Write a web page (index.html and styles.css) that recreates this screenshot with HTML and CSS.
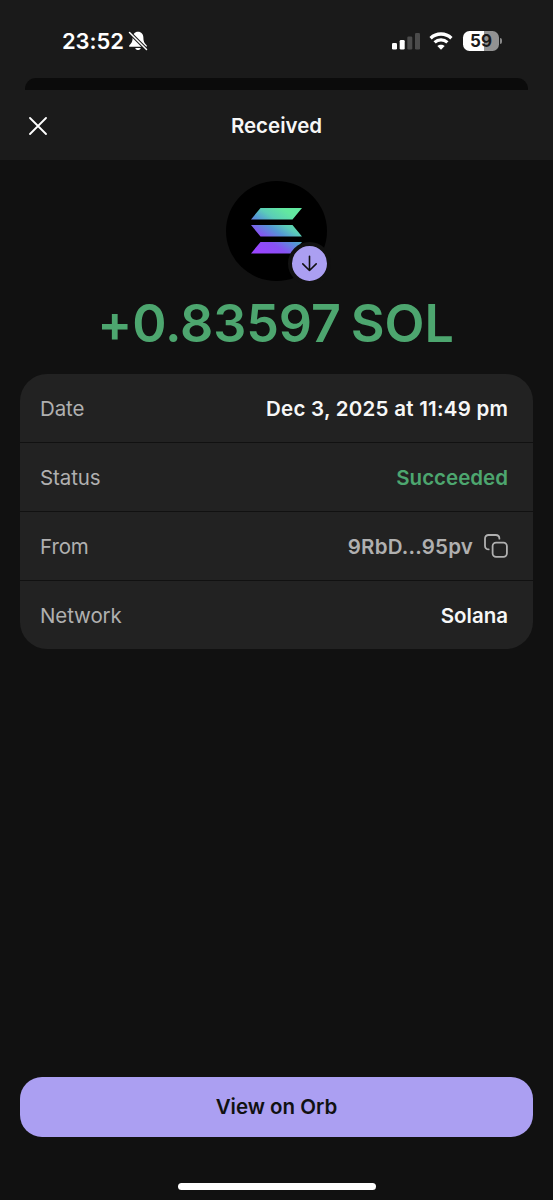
FILE: index.html
```html
<!DOCTYPE html>
<html lang="en">
<head>
    <meta charset="UTF-8">
    <meta name="viewport" content="width=device-width, initial-scale=1.0">
    <title>Received</title>
    <link rel="stylesheet" href="styles.css">
</head>
<body>

    <div class="status-bar">
        <div class="clock">
            <span class="time">23:52</span>
            <svg width="20" height="20" viewBox="0 0 20 20">
                <path d="M10 0.800C6.700 0.800 4.600 3.300 4.600 6.800 4.600 11 3.200 12.600 1.200 14.400V15.800H18.800V14.400C16.800 12.600 15.400 11 15.400 6.800 15.400 3.300 13.300 0.800 10 0.800Z" fill="#fff"/>
                <path d="M7.300 17H12.700C12.200 19.800 7.800 19.800 7.300 17Z" fill="#fff"/>
                <path d="M1.500 1.500L18.500 18.500" stroke="#1a1a1a" stroke-width="3.600"/>
                <path d="M1.500 1.500L18.500 18.500" stroke="#fff" stroke-width="1.500" stroke-linecap="round"/>
            </svg>
        </div>
        <div class="indicators">
            <svg class="signal" width="28" height="18" viewBox="0 0 28 18">
                <rect x="0" y="11" width="5" height="6.500" rx="1.300" fill="#fff"/>
                <rect x="7.700" y="8" width="5" height="9.500" rx="1.300" fill="#fff"/>
                <rect x="15.300" y="4.500" width="5" height="13" rx="1.300" fill="#4b4b4b"/>
                <rect x="23" y="1" width="5" height="16.500" rx="1.300" fill="#4b4b4b"/>
            </svg>
            <svg class="wifi" width="24" height="18" viewBox="0 0 24 18">
                <path d="M1.600 6.200C7.400.600 16.600.600 22.400 6.200" fill="none" stroke="#fff" stroke-width="3.300"/>
                <path d="M5.600 10.400C9.200 7 14.800 7 18.400 10.400" fill="none" stroke="#fff" stroke-width="3.200"/>
                <path d="M8.300 14C10.400 12.200 13.600 12.200 15.700 14L12 17.700Z" fill="#fff"/>
            </svg>
            <div class="battery">59</div>
            <div class="battery-tip"></div>
        </div>
    </div>

    <div class="sheet-behind"></div>

    <div class="header">
        <svg class="close" width="18" height="18" viewBox="0 0 18 18">
            <path d="M1 1L17 17M17 1L1 17" stroke="#fff" stroke-width="1.800" stroke-linecap="round"/>
        </svg>
        <h1>Received</h1>
    </div>

    <div class="content">
        <div class="token">
            <svg width="51" height="46" viewBox="0 0 51 46">
                <defs>
                    <linearGradient id="sol" gradientUnits="userSpaceOnUse" x1="8" y1="49" x2="43" y2="-3">
                        <stop offset="0.080" stop-color="#9945ff"/>
                        <stop offset="0.300" stop-color="#8752f3"/>
                        <stop offset="0.500" stop-color="#5497d5"/>
                        <stop offset="0.650" stop-color="#5bcdb8"/>
                        <stop offset="0.850" stop-color="#62e8a0"/>
                    </linearGradient>
                </defs>
                <path d="M9.500 0H51L41.500 11.500H0ZM0 17H41.500L51 28.500H9.500ZM9.500 34H51L41.500 45.500H0Z" fill="url(#sol)"/>
            </svg>
            <div class="badge">
                <svg width="17" height="17" viewBox="0 0 17 17">
                    <path d="M8.500 1.300V15.500M1.800 8.900L8.500 15.500L15.200 8.900" fill="none" stroke="#111" stroke-width="1.600" stroke-linecap="round" stroke-linejoin="round"/>
                </svg>
            </div>
        </div>

        <div class="amount">+0.83597 SOL</div>

        <div class="details">
            <div class="row">
                <span class="label">Date</span>
                <span class="value date">Dec 3, 2025 at 11:49 pm</span>
            </div>
            <div class="row">
                <span class="label">Status</span>
                <span class="value success">Succeeded</span>
            </div>
            <div class="row">
                <span class="label">From</span>
                <span class="value address">9RbD...95pv</span>
                <svg class="copy" width="24" height="24" viewBox="0 0 24 24">
                    <rect x="8.600" y="8.600" width="14.300" height="14.200" rx="3.500"/>
                    <path d="M4.700 15.400C2.400 15.400 1 14 1 11.700V4.700C1 2.400 2.400 1 4.700 1H11.700C14 1 15.400 2.400 15.400 4.700"/>
                </svg>
            </div>
            <div class="row">
                <span class="label">Network</span>
                <span class="value">Solana</span>
            </div>
        </div>
    </div>

    <div class="footer">
        <button class="view-btn">View on Orb</button>
        <div class="home-indicator"></div>
    </div>

</body>
</html>
```
FILE: styles.css
```css
* {
    box-sizing: border-box;
}

body {
    font-family: Inter, 'Liberation Sans', sans-serif;
    background: #111;
    color: #f7f7f7;
    margin: 0;
    height: 1200px;
    display: flex;
    flex-direction: column;
    overflow: hidden;
}

svg {
    display: block;
    flex-shrink: 0;
}

/* Status bar */
.status-bar {
    height: 78px;
    padding: 4px 51px 0 62px;
    background: #1a1a1a;
    display: flex;
    justify-content: space-between;
}

.clock,
.indicators {
    height: 74px;
    display: flex;
    align-items: center;
    color: #fff;
}

.clock {
    gap: 4px;
}

.time {
    font-size: 22px;
    font-weight: 600;
    letter-spacing: -0.1px;
}

.wifi {
    margin: 0 10px 0 9px;
}

.battery {
    width: 36px;
    height: 20px;
    border-radius: 6.5px;
    background: linear-gradient(to right, #fff 59%, #929292 59%);
    color: #1a1a1a;
    font-size: 17px;
    font-weight: 700;
    line-height: 20px;
    text-align: center;
}

.battery-tip {
    width: 2px;
    height: 6px;
    margin-left: 1px;
    border-radius: 0 2px 2px 0;
    background: #888;
}

.status-bar,
.header {
    flex-shrink: 0;
}

/* Sheet peeking out behind the header */
.sheet-behind {
    height: 12px;
    flex-shrink: 0;
    padding: 0 25px;
    background: #1a1a1a;
}

.sheet-behind::before {
    content: "";
    display: block;
    height: 12px;
    border-radius: 11px 11px 0 0;
    background: #0b0b0b;
}

.header {
    height: 70px;
    padding: 1px 28px 0 29px;
    background: #1b1b1b;
    display: flex;
    align-items: center;
}

.header h1 {
    flex: 1;
    margin: 0 19px 0 0;
    font-size: 20.5px;
    font-weight: 600;
    text-align: center;
}

/* Content */
.content {
    flex: 1;
    padding: 21px 20px 0;
}

.token {
    position: relative;
    width: 101px;
    height: 100px;
    margin: 0 auto;
    border-radius: 50%;
    background: #000;
    display: flex;
    align-items: center;
    justify-content: center;
}

.badge {
    position: absolute;
    right: -4px;
    bottom: -4px;
    width: 43px;
    height: 43px;
    border: 4px solid #111;
    border-radius: 50%;
    background: #ab9ff2;
    display: flex;
    align-items: center;
    justify-content: center;
}

.amount {
    margin: 10px 0 17px;
    padding-right: 2px;
    color: #4da66f;
    font-size: 52px;
    font-weight: 600;
    word-spacing: -3px;
    letter-spacing: -0.1px;
    line-height: 66px;
    text-align: center;
    white-space: nowrap;
}

.details {
    border-radius: 27px;
    background: #222;
    overflow: hidden;
}

.row {
    height: 69px;
    padding: 0 25px 0 20px;
    border-bottom: 1px solid #111;
    display: flex;
    align-items: center;
    font-size: 20.5px;
}

.row:last-child {
    height: 68px;
    border-bottom: none;
}

.label {
    color: #b0b0b0;
    letter-spacing: -0.1px;
}

.value {
    margin-left: auto;
    font-weight: 600;
}

.date {
    margin-right: -0.3px;
    letter-spacing: 0.26px;
}

.success {
    color: #4da66f;
}

.address {
    color: #b0b0b0;
    letter-spacing: 0.2px;
}

.copy {
    margin-left: 11px;
    fill: none;
    stroke: #b0b0b0;
    stroke-width: 1.8;
    stroke-linecap: round;
}

/* Footer */
.footer {
    height: 123px;
    padding: 0 20px;
    display: flex;
    flex-direction: column;
    align-items: center;
}

.view-btn {
    width: 100%;
    height: 60px;
    padding: 0 0 1px;
    border: none;
    border-radius: 22px;
    background: #ab9ff2;
    color: #111;
    font-family: inherit;
    font-size: 20.5px;
    font-weight: 600;
}

.home-indicator {
    width: 198px;
    height: 7px;
    margin-top: 46px;
    border-radius: 4px;
    background: #fff;
}
```
